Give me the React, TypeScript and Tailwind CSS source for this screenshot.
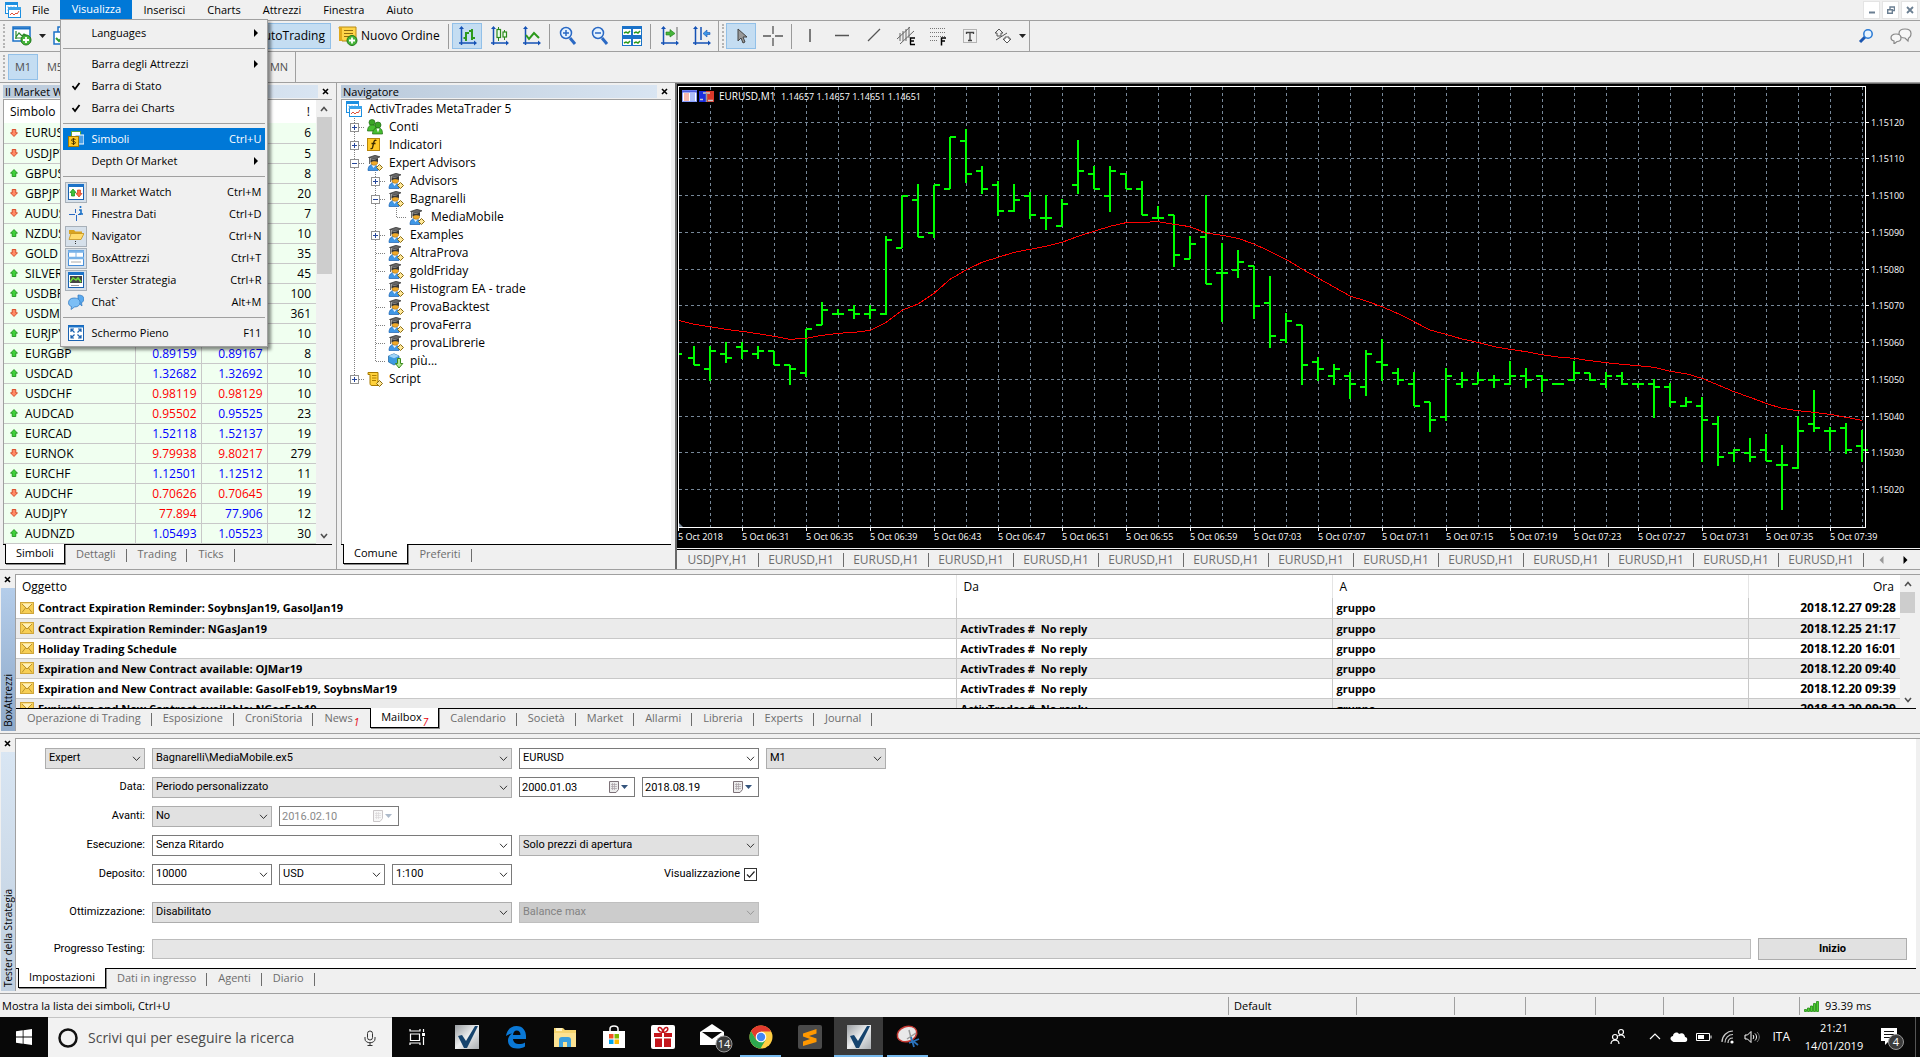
import { useState } from "react"
import type { ReactNode } from "react"
import clsx from "clsx"

type Quote = { symbol: string; up: boolean; bid?: string; ask?: string; bidUp?: boolean; askUp?: boolean; spread: number }

const quotes: Quote[] = [
  { symbol: "EURUSD", up: false, spread: 6 },
  { symbol: "USDJPY", up: false, spread: 5 },
  { symbol: "GBPUSD", up: true, spread: 8 },
  { symbol: "GBPJPY", up: false, spread: 20 },
  { symbol: "AUDUSD", up: false, spread: 7 },
  { symbol: "NZDUSD", up: true, spread: 10 },
  { symbol: "GOLD", up: false, spread: 35 },
  { symbol: "SILVER", up: true, spread: 45 },
  { symbol: "USDBRL", up: true, spread: 100 },
  { symbol: "USDMXN", up: false, spread: 361 },
  { symbol: "EURJPY", up: true, spread: 10 },
  { symbol: "EURGBP", up: true, bid: "0.89159", ask: "0.89167", bidUp: true, askUp: true, spread: 8 },
  { symbol: "USDCAD", up: true, bid: "1.32682", ask: "1.32692", bidUp: true, askUp: true, spread: 10 },
  { symbol: "USDCHF", up: false, bid: "0.98119", ask: "0.98129", spread: 10 },
  { symbol: "AUDCAD", up: true, bid: "0.95502", ask: "0.95525", askUp: true, spread: 23 },
  { symbol: "EURCAD", up: true, bid: "1.52118", ask: "1.52137", bidUp: true, askUp: true, spread: 19 },
  { symbol: "EURNOK", up: false, bid: "9.79938", ask: "9.80217", spread: 279 },
  { symbol: "EURCHF", up: true, bid: "1.12501", ask: "1.12512", bidUp: true, askUp: true, spread: 11 },
  { symbol: "AUDCHF", up: false, bid: "0.70626", ask: "0.70645", spread: 19 },
  { symbol: "AUDJPY", up: false, bid: "77.894", ask: "77.906", askUp: true, spread: 12 },
  { symbol: "AUDNZD", up: true, bid: "1.05493", ask: "1.05523", bidUp: true, askUp: true, spread: 30 },
]

// open, high, low, close in thirds of a pixel, top down
const bars: number[][] = [
  [822, 822, 822, 822], [834, 798, 856, 855], [867, 798, 902, 813], [822, 787, 848, 834], [801, 787, 836, 813],
  [822, 798, 836, 813], [813, 813, 855, 855], [855, 855, 914, 867], [879, 746, 890, 746], [735, 666, 736, 690],
  [702, 687, 705, 702], [690, 676, 716, 702], [702, 676, 716, 690], [702, 468, 705, 480], [504, 348, 505, 348],
  [360, 312, 472, 471], [459, 315, 473, 315], [327, 170, 328, 171], [183, 147, 308, 282], [272, 258, 342, 327],
  [315, 303, 407, 393], [393, 312, 395, 360], [348, 336, 416, 405], [414, 346, 449, 414], [438, 357, 439, 372],
  [315, 180, 342, 272], [282, 258, 328, 327], [348, 258, 396, 272], [282, 282, 328, 327], [327, 303, 406, 405],
  [414, 378, 416, 414], [405, 405, 561, 525], [537, 468, 538, 492], [471, 346, 612, 612], [579, 489, 725, 579],
  [570, 510, 594, 546], [558, 558, 717, 678], [669, 588, 804, 768], [780, 700, 790, 722], [735, 735, 914, 855],
  [846, 831, 903, 867], [888, 852, 914, 867], [888, 876, 957, 912], [921, 810, 948, 822], [846, 777, 902, 855],
  [879, 864, 914, 900], [912, 876, 979, 978], [966, 965, 1056, 1020], [1011, 864, 1022, 888], [912, 876, 924, 900],
  [912, 876, 913, 900], [900, 885, 924, 900], [912, 843, 914, 888], [888, 864, 924, 900], [888, 886, 936, 900],
  [912, 912, 912, 912], [900, 843, 903, 879], [879, 879, 902, 900], [912, 876, 924, 888], [888, 876, 914, 912],
  [912, 909, 924, 912], [912, 897, 1014, 921], [921, 909, 980, 966], [978, 951, 980, 966], [978, 951, 1146, 1020],
  [1032, 1008, 1158, 1131], [1119, 1107, 1146, 1110], [1119, 1074, 1146, 1131], [1110, 1062, 1143, 1143], [1155, 1095, 1290, 1155],
  [1164, 1008, 1166, 1053], [1032, 930, 1056, 1044], [1053, 1041, 1113, 1053], [1044, 1030, 1122, 1110], [1098, 1050, 1146, 1110],
]

const average = [
  721, 733, 740, 748, 754, 761, 769, 778, 775, 766, 760, 757, 751, 727, 691, 672, 640, 598, 570, 547, 532, 517, 508, 499, 487,
  469, 454, 439, 428, 427, 425, 433, 440, 459, 466, 475, 492, 514, 538, 567, 594, 621, 648, 663, 680, 701, 725, 750, 763, 777,
  787, 800, 808, 815, 824, 831, 835, 842, 848, 853, 857, 862, 874, 881, 895, 915, 935, 952, 970, 985, 992, 997, 1003, 1012, 1021,
]

const prices: [string, number][] = [
  ["1.15120", 130], ["1.15110", 238], ["1.15100", 349], ["1.15090", 460], ["1.15080", 571], ["1.15070", 679],
  ["1.15060", 790], ["1.15050", 901], ["1.15040", 1012], ["1.15030", 1120], ["1.15020", 1231],
]

const times = [
  "2018", "06:31", "06:35", "06:39", "06:43", "06:47", "06:51", "06:55", "06:59", "07:03",
  "07:07", "07:11", "07:15", "07:19", "07:23", "07:27", "07:31", "07:35", "07:39",
]

const mails = [
  { subject: "Contract Expiration Reminder: SoybnsJan19, GasolJan19", from: "", time: "2018.12.27 09:28" },
  { subject: "Contract Expiration Reminder: NGasJan19", from: "ActivTrades #  No reply", time: "2018.12.25 21:17" },
  { subject: "Holiday Trading Schedule", from: "ActivTrades #  No reply", time: "2018.12.20 16:01" },
  { subject: "Expiration and New Contract available: OJMar19", from: "ActivTrades #  No reply", time: "2018.12.20 09:40" },
  { subject: "Expiration and New Contract available: GasolFeb19, SoybnsMar19", from: "ActivTrades #  No reply", time: "2018.12.20 09:39" },
  { subject: "Expiration and New Contract available: NGasFeb19", from: "ActivTrades #  No reply", time: "2018.12.20 09:39" },
]

const Y = (v: number) => Math.round(v / 3) - 4
const X = (i: number) => 1 + 16 * i

/* ---------- icons ---------- */

function Svg({ size = 16, children }: { size?: number; children: ReactNode }) {
  return (
    <svg width={size} height={size} viewBox={`0 0 ${size} ${size}`} fill="none" className="shrink-0" aria-hidden="true">
      {children}
    </svg>
  )
}

function AppIcon() {
  return (
    <Svg>
      <rect x="0.5" y="0.5" width="12" height="11" fill="#fff" stroke="#1c8fe0" />
      <path d="M0 0h13v3H0z" fill="#1c8fe0" />
      <path d="M2 5h9M2 8h9" stroke="#9ccbee" strokeDasharray="2 1" />
      <rect x="3.5" y="5.5" width="12" height="10" fill="#fff" stroke="#1c8fe0" />
      <path d="M3 5h13v3H3z" fill="#3aa3ea" />
      <path d="M5 13l2-2 2 2 2-2 1 1 2-3" stroke="#e0513a" />
    </Svg>
  )
}

function Arrow({ up }: { up: boolean }) {
  return (
    <svg width="8" height="8" viewBox="0 0 8 8" className="shrink-0" aria-hidden="true">
      {up ? (
        <path d="M4 .5L7.5 4.2H5.8V7.5H2.2V4.2H.5z" fill="#3fd03a" stroke="#138a12" strokeWidth=".8" />
      ) : (
        <path d="M4 7.5L.5 3.8h1.7V.5h3.6v3.3h1.7z" fill="#ff8a66" stroke="#cf3712" strokeWidth=".8" />
      )}
    </svg>
  )
}

function ExpertIcon() {
  return (
    <Svg>
      <path d="M1 15.500c0-4 2-6 5-6s5 2 5 6z" fill="#3f97e6" stroke="#1b62b0" strokeWidth=".7" />
      <path d="M4.5 10l2 3L9 10z" fill="#eaf4ff" />
      <path d="M4 5.500h6.500v2.500c0 3-6.500 3-6.500 0z" fill="#f0a929" stroke="#8a5c08" strokeWidth=".5" />
      <path d="M1.500 2.500L8 .3 13 1.800 7.500 4.300z" fill="#666" stroke="#222" strokeWidth=".6" />
      <path d="M3.500 4v3.500c2-1.500 5.500-1.500 7.500-.5V3L7.500 4.800z" fill="#383838" />
      <path d="M2.500 3V9" stroke="#444" strokeWidth=".8" />
      <path d="M12.500 9.500l3 3-3 3-3-3z" fill="#ffe89a" stroke="#8a6a10" />
    </Svg>
  )
}

function ContiIcon() {
  return (
    <Svg>
      <circle cx="5" cy="3.500" r="3" fill="#3aa627" stroke="#1f6a14" strokeWidth=".7" />
      <path d="M0.500 12c0-4 2-6 5-6s4 2 4 6z" fill="#46bd30" stroke="#1f6a14" strokeWidth=".7" />
      <circle cx="11" cy="6" r="3" fill="#3aa627" stroke="#1f6a14" strokeWidth=".7" />
      <path d="M5.500 15c0-4 2-6 5.500-6s4.500 2 4.500 6z" fill="#46bd30" stroke="#1f6a14" strokeWidth=".7" />
      <path d="M9.500 9.500l1.500 4 1.500-4z" fill="#fff" />
    </Svg>
  )
}

function IndicatorIcon() {
  return (
    <Svg>
      <rect x="0.500" y="1.500" width="12" height="12" fill="#ffc926" stroke="#b8860b" />
      <path d="M9.500 3.500c-2-.8-2.500.5-3 3l-.8 3.500c-.3 1.500-1 2-2.200 1.500M4.500 6.500h4" stroke="#3a2b00" strokeWidth="1.300" />
    </Svg>
  )
}

function MoreIcon() {
  return (
    <Svg>
      <path d="M0.500 3L6 .8 11 3v6.500L6 12 .5 9z" fill="#3d9be0" stroke="#1a5f9e" strokeWidth=".7" />
      <path d="M.5 3L6 5.200 11 3 6 .8z" fill="#9fd3f7" />
      <path d="M9.500 5.500h3v5h2.300L11 15 7.500 10.500h2z" fill="#b7ea93" stroke="#3a8a1c" />
    </Svg>
  )
}

function ScriptIcon() {
  return (
    <Svg>
      <path d="M1 1.500h10v10.500h1v2.500H5c-1.500 0-2-1-2-2v-9H1z" fill="#ffd23c" stroke="#a87a00" />
      <path d="M5 4.500h4.500M5 7h4.500M5 9.500h4" stroke="#b07f00" />
      <path d="M12.500 9.500l3 3-3 3-3-3z" fill="#ffe89a" stroke="#8a6a10" />
    </Svg>
  )
}

function MailIcon() {
  return (
    <svg width="14" height="12" viewBox="0 0 14 12" className="shrink-0" aria-hidden="true">
      <rect x=".5" y=".5" width="13" height="11" fill="#f7cf55" stroke="#d0a63c" />
      <path d="M2 1.500h10L7 6.500z" fill="#fff0b8" />
      <path d="M2 2l5 5 5-5M2 10.500l3.500-4.500M12 10.500L8.500 6" stroke="#a98220" fill="none" strokeWidth=".8" />
    </svg>
  )
}

function CloseMark() {
  return (
    <svg width="7" height="7" viewBox="0 0 7 7" aria-hidden="true">
      <path d="M1 1l5 5M6 1L1 6" stroke="#000" strokeWidth="1.600" />
    </svg>
  )
}

function Chevron({ dir = "down" }: { dir?: "up" | "down" }) {
  return (
    <svg width="8" height="6" viewBox="0 0 8 6" aria-hidden="true">
      <path d={dir === "down" ? "M1 1l3 3.500L7 1" : "M1 5l3-3.500L7 5"} stroke="#505050" strokeWidth="1.600" fill="none" />
    </svg>
  )
}

/* ---------- toolbar ---------- */

function Axes() {
  return (
    <>
      <path d="M4.500 2v17M2 17h15" stroke="#1552b5" strokeWidth="1.500" />
      <path d="M4.500 0l2.500 3H2zM20 17l-3-2.500v5z" fill="#1552b5" />
    </>
  )
}

function ToolButton({ label, pressed, children }: { label: string; pressed?: boolean; children: ReactNode }) {
  return (
    <button
      aria-label={label}
      className={clsx(
        "flex h-[26px] w-[30px] items-center justify-center border",
        pressed ? "border-[#92c0e8] bg-[#c4ddf2]" : "border-transparent hover:bg-[#d8e8f6]"
      )}
    >
      <Svg size={20}>{children}</Svg>
    </button>
  )
}

function Separator() {
  return <span className="mx-px h-[25px] w-px bg-[#9a9a9a]" />
}

function Grip() {
  return <span className="h-6 w-0 border-l-2 border-dotted border-[#b4b4b4]" />
}

function Caret() {
  return (
    <svg width="7" height="4" viewBox="0 0 7 4" aria-hidden="true">
      <path d="M0 0h7L3.500 4z" fill="#222" />
    </svg>
  )
}

function Toolbar() {
  return (
    <div className="flex h-[31px] items-center border-t border-[#a0a0a0] bg-[#f0f0f0]">
      <div className="flex h-full items-center gap-[2px] border-r border-[#a0a0a0] pl-[3px] pr-[3px]">
        <Grip />
        <ToolButton label="Nuovo Chart">
          <rect x="1" y="1" width="17" height="14" fill="#fff" stroke="#1b72c8" strokeWidth="1.500" />
          <path d="M1 2.500h17" stroke="#1b72c8" strokeWidth="2" />
          <path d="M4 5v8M3 12h10M4 11l3-4 3 3 2-2 3 2" stroke="#2c8a2c" strokeWidth="1.200" />
          <circle cx="14" cy="14" r="5" fill="#46b53a" stroke="#1f7a18" />
          <path d="M14 11v6M11 14h6" stroke="#fff" strokeWidth="1.800" />
        </ToolButton>
        <Caret />
        <ToolButton label="Profili">
          <rect x="5" y="1" width="13" height="10" fill="#fff" stroke="#1b72c8" strokeWidth="1.500" />
          <rect x="1" y="6" width="13" height="12" fill="#fff" stroke="#1b72c8" strokeWidth="1.500" />
          <path d="M3 12l3 3 4-4 3 3" stroke="#2f9a2f" strokeWidth="2" />
        </ToolButton>
        <button className="ml-[153px] h-[26px] w-[98px] border border-[#92c0e8] bg-[#c4ddf2] pr-[5px] text-right text-[12px]">AutoTrading</button>
        <button className="flex h-[26px] items-center gap-[3px] px-[5px] text-[12px]">
          <Svg size={20}>
            <path d="M1 1h17v14H4z" fill="#ffd54a" stroke="#b88a10" />
            <path d="M1 1v14h3V1z" fill="#e0a91c" />
            <path d="M6 4.500h9M6 7.500h9M6 10.500h5" stroke="#8f6c10" />
            <circle cx="14" cy="14.500" r="5" fill="#46b53a" stroke="#1f7a18" />
            <path d="M14 11.500v6M11 14.500h6" stroke="#fff" strokeWidth="1.800" />
          </Svg>
          Nuovo Ordine
        </button>
        <Separator />
        <ToolButton label="Barre" pressed>
          <Axes />
          <path d="M9 6v9M6.500 12H9M9 7h3M15 3v11M12 5h3M15 12h3" stroke="#2c9a1c" strokeWidth="2" />
        </ToolButton>
        <ToolButton label="Candele">
          <Axes />
          <path d="M9.500 1v14M15.500 4v10" stroke="#2c8a1c" />
          <rect x="8" y="3.500" width="3.500" height="8" fill="#eaffea" stroke="#2c8a1c" strokeWidth="1.200" />
          <rect x="14" y="6" width="3.500" height="5" fill="#eaffea" stroke="#2c8a1c" strokeWidth="1.200" />
        </ToolButton>
        <ToolButton label="Linea">
          <Axes />
          <path d="M5 9l3 4 5-6 5 5" stroke="#2c9a1c" strokeWidth="2" />
        </ToolButton>
        <Separator />
        <ToolButton label="Zoom avanti">
          <path d="M12 12l5 6" stroke="#2a69c4" strokeWidth="3" />
          <circle cx="8" cy="7" r="5.500" fill="#e6f3ff" stroke="#2a69c4" strokeWidth="1.500" />
          <path d="M5 7h6M8 4v6" stroke="#2a69c4" strokeWidth="1.500" />
        </ToolButton>
        <ToolButton label="Zoom indietro">
          <path d="M12 12l5 6" stroke="#2a69c4" strokeWidth="3" />
          <circle cx="8" cy="7" r="5.500" fill="#e6f3ff" stroke="#2a69c4" strokeWidth="1.500" />
          <path d="M5 7h6" stroke="#2a69c4" strokeWidth="1.500" />
        </ToolButton>
        <ToolButton label="Affianca finestre">
          {[[0, 0], [10, 0], [0, 10], [10, 10]].map(([x, y]) => (
            <g key={`${x}-${y}`}>
              <rect x={x + 0.5} y={y + 0.5} width="9" height="9" fill="#fff" stroke="#1b72c8" />
              <path d={`M${x} ${y + 1.5}h10`} stroke="#1b72c8" strokeWidth="3" />
              <path d={`M${x + 2} ${y + 7}l2-1 2 1 2-2`} stroke="#2c9a1c" strokeWidth="1.500" />
            </g>
          ))}
        </ToolButton>
        <Separator />
        <ToolButton label="Scorrimento automatico">
          <Axes />
          <path d="M18 1v13" stroke="#666" />
          <path d="M7 6h4V3.500L16 7.500 11 11V9H7z" fill="#46b53a" stroke="#1f7a18" strokeWidth=".6" />
        </ToolButton>
        <ToolButton label="Spostamento chart">
          <Axes />
          <path d="M10 1v13" stroke="#1552b5" strokeWidth="1.500" />
          <path d="M19 6.500h-3V4l-4 3.500 4 3.500V8.500h3z" fill="#3f97e6" stroke="#1552b5" strokeWidth=".6" />
        </ToolButton>
        <span className="mr-px h-full w-px bg-[#a0a0a0]" />
        <Grip />
        <ToolButton label="Cursore" pressed>
          <path d="M7 3v12l3-3 2 5 2-1-2-5h4z" fill="#999" stroke="#444" />
        </ToolButton>
        <ToolButton label="Croce">
          <path d="M10 0v8M10 12v8M0 10h8M12 10h8" stroke="#555" strokeWidth="1.300" />
        </ToolButton>
        <Separator />
        <ToolButton label="Linea verticale"><path d="M10 3v13" stroke="#555" strokeWidth="1.500" /></ToolButton>
        <ToolButton label="Linea orizzontale"><path d="M3 9.500h14" stroke="#555" strokeWidth="1.500" /></ToolButton>
        <ToolButton label="Linea di tendenza"><path d="M4 15L16 3" stroke="#555" strokeWidth="1.300" /></ToolButton>
        <ToolButton label="Canale">
          <path d="M1 13L14 1M4 18L18 5M4 7v8M7 5v10M10 3v12M13 1v11" stroke="#666" />
          <path d="M14 12h5M14 15h4M14 18.500h5M14.500 11.500v7" stroke="#000" strokeWidth="1.400" />
        </ToolButton>
        <ToolButton label="Fibonacci">
          <path d="M2 2.500h16M2 6.500h16M2 10.500h16M2 14.500h8" stroke="#777" strokeDasharray="1 1" />
          <path d="M13 12h5M13 15h4M13.500 11.500v8" stroke="#000" strokeWidth="1.500" />
        </ToolButton>
        <ToolButton label="Testo">
          <rect x="3.500" y="3.500" width="13" height="13" stroke="#777" strokeDasharray="1 1" />
          <path d="M6.500 8V6.500h7V8M10 6.500v8M8 14.500h4" stroke="#444" strokeWidth="1.300" />
        </ToolButton>
        <ToolButton label="Frecce">
          <path d="M7 3l4 4H9v3H5V7H3zM4 14L15 7" stroke="#555" />
          <path d="M15 17l-4-4h2v-2h4v2h2z" fill="#fff" stroke="#555" />
        </ToolButton>
        <Caret />
      </div>
      <div className="ml-auto flex items-center gap-4 pr-2">
        <Svg>
          <path d="M2 14l5-5" stroke="#1b56b0" strokeWidth="3" />
          <circle cx="10" cy="6" r="4.200" fill="#e8f4ff" stroke="#2a7ad4" strokeWidth="1.500" />
        </Svg>
        <svg width="22" height="16" viewBox="0 0 22 16" fill="#f7f7f7" stroke="#888" strokeWidth="1.200" aria-hidden="true">
          <path d="M15 1c4 0 6 1.500 6 4.500S19 10 18.500 10l-.5 3-3-3c-3 0-6-1.500-6-4.500S11 1 15 1z" />
          <path d="M6 6c3.500 0 5 1.500 5 4s-2 3.500-4 3.500L4 16v-3c-2-.5-3-1.500-3-3 0-2.500 2-4 5-4z" />
        </svg>
      </div>
    </div>
  )
}

/* ---------- menus ---------- */

const menuIcons: Record<string, ReactNode> = {
  symbols: (
    <Svg>
      <rect x="3.500" y=".5" width="9" height="8" fill="#fff" stroke="#58a83c" />
      <rect x="7" y="4" width="9" height="9" fill="#4aa0e8" stroke="#fff" />
      <rect x=".5" y="5.500" width="10" height="10" fill="#ffc926" stroke="#a87a00" />
      <path d="M7.500 8.500c-2-1-4-.5-4 .7 0 1.600 4 .8 4 2.500 0 1.300-2.500 1.500-4 .6M5.500 7.200v6.800" stroke="#4a3600" />
    </Svg>
  ),
  market: (
    <Svg>
      <rect x=".5" y=".5" width="15" height="15" fill="#fff" stroke="#1b62b0" />
      <path d="M0 1.500h16" stroke="#1b72c8" strokeWidth="3" />
      <path d="M5 5l3 3.500H6.500V12h-3V8.500H2z" fill="#3fc03a" stroke="#138a12" strokeWidth=".7" />
      <path d="M11 13L8 9.500h1.500V6h3v3.500H14z" fill="#ff6a46" stroke="#cf3712" strokeWidth=".7" />
    </Svg>
  ),
  data: (
    <Svg>
      <path d="M1 8.500h6M8.500 9v6M10 8.500h3M7.500 3v4" stroke="#2a69c4" />
      <path d="M12.500 0v2M11 4h2v4M11 8h4" stroke="#1b72c8" strokeWidth="1.600" />
    </Svg>
  ),
  navigator: (
    <Svg>
      <path d="M1 2h5l1.500 1.500H14V6H1z" fill="#d9a420" />
      <path d="M3 5.500h13l-3 6H1z" fill="#ffdc6e" stroke="#c4921c" strokeWidth=".8" />
      <path d="M7.500 13v3" stroke="#333" strokeDasharray="1 1" />
    </Svg>
  ),
  toolbox: (
    <Svg>
      <rect x=".5" y=".5" width="15" height="15" fill="#fff" stroke="#4a90d9" />
      <path d="M0 1.500h16M0 8h16" stroke="#7ab3e8" strokeWidth="2.500" />
      <path d="M8 2v6" stroke="#7ab3e8" />
      <path d="M3 12h10" stroke="#aaa" />
    </Svg>
  ),
  tester: (
    <Svg>
      <rect x=".5" y=".5" width="15" height="15" fill="#fff" stroke="#1b62b0" />
      <path d="M0 1.500h16" stroke="#1b72c8" strokeWidth="3" />
      <path d="M2 4h12v7H2z" fill="#444" />
      <path d="M2 10l3-4 3 2 2-2 3 4" stroke="#6fdc3a" strokeWidth="1.500" />
      <path d="M3 13.500h8" stroke="#999" />
    </Svg>
  ),
  chat: (
    <Svg>
      <path d="M10 1c4 0 6 1.500 6 4 0 2-1 3-2.500 3.500L14 12l-4-3.500z" fill="#5aa9ee" stroke="#2a73bd" strokeWidth=".7" />
      <path d="M6 4c4 0 6 1.800 6 4.500S10 13 6.500 13L3 15.500 3.500 12.500C1.500 12 .5 10.500.5 8.800.5 6 2.500 4 6 4z" fill="#7cbef5" stroke="#2a73bd" strokeWidth=".7" />
    </Svg>
  ),
  full: (
    <Svg>
      <rect x=".5" y=".5" width="15" height="15" fill="#fff" stroke="#1b62b0" />
      <path d="M0 1.500h16" stroke="#1b72c8" strokeWidth="2" />
      <path d="M3 7V4h3M10 4h3v3M13 10v3h-3M6 13H3v-3M3 4l3.500 3.500M13 4L9.500 7.500M13 13l-3.500-3.500M3 13l3.500-3.500" stroke="#1b62b0" strokeWidth="1.200" />
    </Svg>
  ),
}

type MenuItem = { label: string; keys?: string; icon?: string; boxed?: boolean; checked?: boolean; sub?: boolean; active?: boolean }

const menuGroups: MenuItem[][] = [
  [{ label: "Languages", sub: true }],
  [
    { label: "Barra degli Attrezzi", sub: true },
    { label: "Barra di Stato", checked: true },
    { label: "Barra dei Charts", checked: true },
  ],
  [
    { label: "Simboli", keys: "Ctrl+U", icon: "symbols", active: true },
    { label: "Depth Of Market", sub: true },
  ],
  [
    { label: "Il Market Watch", keys: "Ctrl+M", icon: "market", boxed: true },
    { label: "Finestra Dati", keys: "Ctrl+D", icon: "data" },
    { label: "Navigator", keys: "Ctrl+N", icon: "navigator", boxed: true },
    { label: "BoxAttrezzi", keys: "Ctrl+T", icon: "toolbox", boxed: true },
    { label: "Terster Strategia", keys: "Ctrl+R", icon: "tester", boxed: true },
    { label: "Chat`", keys: "Alt+M", icon: "chat" },
  ],
  [{ label: "Schermo Pieno", keys: "F11", icon: "full" }],
]

function ViewMenu() {
  return (
    <div className="absolute left-0 top-[19px] z-10 w-[208px] border border-[#a0a0a0] bg-[#f0f0f0] p-[2px] text-black shadow-[3px_3px_3px_rgba(0,0,0,0.45)]">
      {menuGroups.map((group, g) => (
        <div key={g} className={clsx(g > 0 && "mt-1 border-t border-[#a0a0a0] pt-1")}>
          {group.map(item => (
            <button
              key={item.label}
              className={clsx("flex h-[22px] w-full items-center pr-1 text-[11px]", item.active && "bg-[#0078d7] text-white")}
            >
              <span
                className={clsx(
                  "ml-[2px] mr-1 flex h-[21px] w-[22px] shrink-0 items-center justify-center border",
                  item.boxed ? "border-[#a8b0b8] bg-[#d6e0ea]" : "border-transparent"
                )}
              >
                {item.icon && menuIcons[item.icon]}
                {item.checked && (
                  <Svg size={10}>
                    <path d="M1.500 5l2.500 3 4.500-6" stroke="#000" strokeWidth="1.800" />
                  </Svg>
                )}
              </span>
              <span className="grow text-left">{item.label}</span>
              {item.keys}
              {item.sub && (
                <svg width="7" height="8" viewBox="0 0 7 8" aria-hidden="true"><path d="M0 0l4 4-4 4z" fill="#000" /></svg>
              )}
            </button>
          ))}
        </div>
      ))}
    </div>
  )
}

function MenuBar() {
  const [open, setOpen] = useState(true)
  return (
    <nav className="flex h-[20px] items-center bg-[#f0f0f0] pl-[5px] text-[11px]">
      <AppIcon />
      <button className="px-[11px]">File</button>
      <div className="relative h-full">
        <button onClick={() => setOpen(o => !o)} className="h-[19px] w-[72px] bg-[#0078d7] text-white">Visualizza</button>
        {open && <ViewMenu />}
      </div>
      {["Inserisci", "Charts", "Attrezzi", "Finestra", "Aiuto"].map(name => (
        <button key={name} className="px-[11px]">{name}</button>
      ))}
      <div className="ml-auto flex items-center gap-[2px] pr-[2px]">
        <button aria-label="Riduci" className="flex h-[18px] w-[17px] items-center justify-center border border-[#e4e4e4] bg-white">
          <Svg size={8}><path d="M1 6.500h6" stroke="#6b7f92" strokeWidth="2" /></Svg>
        </button>
        <button aria-label="Ripristina" className="flex h-[18px] w-[17px] items-center justify-center border border-[#e4e4e4] bg-white">
          <Svg size={8}><path d="M3 3V1h4.500v3.500H6M.7 3.700h4.600v3.600H.7z" stroke="#6b7f92" strokeWidth="1.400" /></Svg>
        </button>
        <button aria-label="Chiudi" className="flex h-[18px] w-[17px] items-center justify-center border border-[#e4e4e4] bg-white">
          <Svg size={8}><path d="M1 1l6 6M7 1L1 7" stroke="#6b7f92" strokeWidth="1.800" /></Svg>
        </button>
      </div>
    </nav>
  )
}

function Timeframes() {
  return (
    <div className="h-[32px] border-y border-[#a0a0a0] bg-[#f0f0f0]">
      <div className="flex h-full w-[296px] items-center gap-[2px] border-r border-[#a0a0a0] pl-[3px]">
        <Grip />
        {["M1", "M5", "M15", "M30", "H1", "H4", "D1", "W1", "MN"].map((tf, i) => (
          <button
            key={tf}
            className={clsx("h-[26px] w-[30px] border text-[11px] text-[#505050]", i === 0 ? "ml-px border-[#92c0e8] bg-[#c4ddf2]" : "border-transparent")}
          >
            {tf}
          </button>
        ))}
      </div>
    </div>
  )
}

/* ---------- shared panel parts ---------- */

function PanelTitle({ children }: { children: ReactNode }) {
  return (
    <div className="flex h-[15px] items-center text-[11px] leading-[14px]">
      <h2 className="h-[13px] grow bg-linear-to-r from-[#b9c9da] to-[#d9e5f2] pl-[2px] leading-[13px]">{children}</h2>
      <button aria-label="Chiudi" className="flex w-[14px] justify-center"><CloseMark /></button>
    </div>
  )
}

function Tabs({ items, active, badges = {} }: { items: string[]; active: string; badges?: Record<string, number> }) {
  return (
    <div className="flex h-[21px] items-start border-t border-black bg-[#f0f0f0] text-[11px]">
      {items.map((name, i) => {
        const on = name === active
        const beforeActive = items[i + 1] === active
        return (
          <button
            key={name}
            className={clsx(
              "relative flex items-center whitespace-nowrap",
              on ? "-mt-px h-[20px] border border-t-0 border-black bg-white px-[10px] text-black shadow-[1px_1px_0_#888]" : "h-[18px] px-[11px] text-[#6d6d6d]",
              on && i === 0 && "ml-[2px]"
            )}
          >
            {name}
            {badges[name] && <sub className="bottom-[-4px] pl-px text-[10px] italic text-red-600">{badges[name]}</sub>}
            {!on && !beforeActive && <span className="absolute right-0 top-[4px] h-[13px] w-px bg-[#6d6d6d]" />}
          </button>
        )
      })}
    </div>
  )
}

function ScrollBar({ thumb }: { thumb: string }) {
  return (
    <div className="flex w-[16px] shrink-0 flex-col items-center bg-[#f0f0f0]">
      <span className="flex h-[17px] items-center"><Chevron dir="up" /></span>
      <span className={clsx("w-[15px] bg-[#cdcdcd]", thumb)} />
      <span className="mt-auto flex h-[16px] items-center"><Chevron /></span>
    </div>
  )
}

function SideBar({ title, tone }: { title: string; tone: string }) {
  return (
    <div className="flex w-[15px] shrink-0 flex-col items-center">
      <button aria-label="Chiudi" className="mb-[3px] flex h-[11px] items-center"><CloseMark /></button>
      <div className={clsx("flex w-[14px] grow items-center justify-end text-[10px] leading-[14px] [writing-mode:vertical-rl]", tone)}>
        <span className="rotate-180 whitespace-nowrap pt-[4px]">{title}</span>
      </div>
    </div>
  )
}

/* ---------- top panels ---------- */

function MarketWatch() {
  const cell = "h-[20px] border-b border-r border-[#c8c8c8] p-0 pr-[4px] text-right"
  return (
    <section className="flex w-[337px] shrink-0 flex-col border-r border-[#a0a0a0] pl-[3px] pr-[4px] pt-px">
      <PanelTitle>Il Market Watch</PanelTitle>
      <div className="flex h-[445px] border-l border-t border-[#a0a0a0] bg-white">
        <table className="w-full table-fixed border-collapse text-[12px] leading-[19px]">
          <colgroup>
            <col />
            <col className="w-[66px]" />
            <col className="w-[66px]" />
            <col className="w-[49px]" />
          </colgroup>
          <thead>
            <tr className="h-[23px]">
              <th className="pl-[6px] text-left font-normal">Simbolo</th>
              <th />
              <th />
              <th className="pr-[6px] text-right font-normal">!</th>
            </tr>
          </thead>
          <tbody className="bg-[#f0fff0]">
            {quotes.map(q => (
              <tr key={q.symbol}>
                <td className="h-[20px] border-b border-r border-[#c8c8c8] p-0 pl-[6px]">
                  <span className="flex items-center gap-[7px]"><Arrow up={q.up} />{q.symbol}</span>
                </td>
                <td className={clsx(cell, q.bidUp ? "text-[#0000ff]" : "text-[#ff0000]")}>{q.bid}</td>
                <td className={clsx(cell, q.askUp ? "text-[#0000ff]" : "text-[#ff0000]")}>{q.ask}</td>
                <td className="h-[20px] border-b border-[#c8c8c8] p-0 pr-[5px] text-right">{q.spread}</td>
              </tr>
            ))}
          </tbody>
        </table>
        <ScrollBar thumb="h-[157px]" />
      </div>
      <Tabs items={["Simboli", "Dettagli", "Trading", "Ticks"]} active="Simboli" />
    </section>
  )
}

type Node = { label: string; depth: number; open?: boolean; leaf?: boolean; icon?: ReactNode; last?: boolean }

const tree: Node[] = [
  { label: "Conti", depth: 0, icon: <ContiIcon /> },
  { label: "Indicatori", depth: 0, icon: <IndicatorIcon /> },
  { label: "Expert Advisors", depth: 0, open: true },
  { label: "Advisors", depth: 1 },
  { label: "Bagnarelli", depth: 1, open: true },
  { label: "MediaMobile", depth: 2, leaf: true, last: true },
  { label: "Examples", depth: 1 },
  { label: "AltraProva", depth: 1, leaf: true },
  { label: "goldFriday", depth: 1, leaf: true },
  { label: "Histogram EA - trade", depth: 1, leaf: true },
  { label: "ProvaBacktest", depth: 1, leaf: true },
  { label: "provaFerra", depth: 1, leaf: true },
  { label: "provaLibrerie", depth: 1, leaf: true },
  { label: "più...", depth: 1, leaf: true, icon: <MoreIcon />, last: true },
  { label: "Script", depth: 0, icon: <ScriptIcon />, last: true },
]

function TreeLines({ node }: { node: Node }) {
  const cols = Array.from({ length: node.depth + 1 }, (_, i) => i)
  return (
    <>
      {cols.map(i => {
        const own = i === node.depth
        return (
          <svg key={i} width="21" height="18" viewBox="0 0 21 18" fill="none" shapeRendering="crispEdges" aria-hidden="true">
            <path d={own && node.last ? "M8.500 0v9" : "M8.500 0v18"} stroke="#808080" strokeDasharray="1 1" />
            {own && <path d="M9 9.500h10" stroke="#808080" strokeDasharray="1 1" />}
            {own && !node.leaf && (
              <>
                <rect x="4.500" y="5.500" width="8" height="8" fill="#fff" stroke="#919191" />
                <path d={node.open ? "M6 9.500h5" : "M6 9.500h5M8.500 7v5"} stroke="#26479b" />
              </>
            )}
          </svg>
        )
      })}
    </>
  )
}

function Navigator() {
  return (
    <section className="flex w-[338px] shrink-0 flex-col pl-[4px] pr-[4px] pt-px">
      <PanelTitle>Navigatore</PanelTitle>
      <div className="grow border-l border-t border-[#a0a0a0] bg-white pl-[4px] text-[12px]">
        <div className="flex h-[18px] items-center gap-[6px]">
          <AppIcon />
          ActivTrades MetaTrader 5
        </div>
        <ul>
          {tree.map(n => (
            <li key={n.label} className="flex h-[18px] items-center">
              <TreeLines node={n} />
              {n.icon ?? <ExpertIcon />}
              <span className="pl-[6px]">{n.label}</span>
            </li>
          ))}
        </ul>
      </div>
      <Tabs items={["Comune", "Preferiti"]} active="Comune" />
      <div className="h-[4px]" />
    </section>
  )
}

function Chart() {
  return (
    <svg className="block h-[465px] w-full bg-black" role="img" aria-label="EURUSD,M1">
      <g shapeRendering="crispEdges" fill="none">
        <g stroke="#778899" strokeDasharray="3 3">
          {prices.map(([p, v]) => <path key={p} d={`M2 ${Y(v) - 0.5}H1188`} />)}
          {Array.from({ length: 37 }, (_, i) => <path key={i} d={`M${X(i * 2 + 2) + 0.5} 3V443`} />)}
        </g>
        <path
          d={bars.map(([o, h, l, c], i) => {
            const x = X(i)
            const left = i === 0 ? "" : `M${x - 6} ${Y(o)}H${x}`
            return `${left}M${x} ${Y(h)}V${Y(l)}M${x} ${Y(c)}H${i === 0 ? x + 4 : x + 6}`
          }).join("")}
          stroke="#00ff00"
          strokeWidth="2"
        />
        <path d={average.map((v, i) => `${i ? "L" : "M"}${X(i)} ${v / 3 - 4}`).join("")} stroke="#ff0000" />
        <path d="M1.500 2.500H1188.500V443.500H1.500z" stroke="#fff" />
        {prices.map(([p, v]) => <path key={p} d={`M1188 ${Y(v) - 0.5}h4`} stroke="#fff" />)}
        {times.map((t, i) => <path key={t} d={`M${X(i * 4) + 0.5} 443v4`} stroke="#fff" />)}
      </g>
      <path d="M2 439l4 4H2z" fill="#778899" />
      <g fill="#fff" fontSize="9">
        {prices.map(([p, v]) => <text key={p} x="1194" y={Y(v) + 3}>{p}</text>)}
        {times.map((t, i) => <text key={t} x={X(i * 4)} y="456">5 Oct {t}</text>)}
        <text x="42" y="16" fontSize="10">EURUSD,M1</text>
        <text x="104" y="16">1.14657 1.14657 1.14651 1.14651</text>
      </g>
      <g>
        <rect x="5.500" y="6.500" width="14" height="11" fill="#fff" stroke="#8aa0ff" />
        <path d="M5 7.500h15" stroke="#4a5ae0" strokeWidth="2" />
        <path d="M7 10h5M7 12h5M7 14h5M7 16h5" stroke="#f07060" />
        <path d="M13 10h5M13 12h5M13 14h5M13 16h5" stroke="#5a7af0" />
        <rect x="22" y="7" width="7" height="11" fill="#1a2ee0" />
        <rect x="29" y="7" width="8" height="11" fill="#d8382a" />
        <path d="M26 9h7M26 15.500h-3M31 16.500h5" stroke="#ccc" strokeWidth="1.500" />
        <path d="M29.500 9v9" stroke="#999" strokeWidth="1.500" />
      </g>
    </svg>
  )
}

function ChartArea() {
  return (
    <section className="flex min-w-0 grow flex-col border-l-2 border-t border-[#696969]">
      <Chart />
      <div className="mt-px flex h-[20px] items-center border-t border-black text-[12px] text-[#6d6d6d]">
        {Array.from({ length: 14 }, (_, i) => (
          <button key={i} className="h-[14px] w-[85px] shrink-0 border-r border-[#6d6d6d] leading-[14px] first:w-[82px]">
            {i === 0 ? "USDJPY,H1" : "EURUSD,H1"}
          </button>
        ))}
        <div className="ml-auto flex gap-4 pr-[10px]">
          <button aria-label="Indietro"><Svg size={8}><path d="M5.500 0v8L1.500 4z" fill="#999" /></Svg></button>
          <button aria-label="Avanti"><Svg size={8}><path d="M1.500 0v8l4-4z" fill="#000" /></Svg></button>
        </div>
      </div>
    </section>
  )
}

/* ---------- toolbox ---------- */

function Toolbox() {
  return (
    <section className="flex h-[164px] border-b border-[#a0a0a0] pb-[2px] pt-[4px]">
      <SideBar title="BoxAttrezzi" tone="bg-linear-to-b from-[#b4cdea] to-[#8fa9c8]" />
      <div className="flex min-w-0 grow flex-col border-l border-t border-[#a0a0a0] pr-[4px]">
        <div className="flex h-[133px] overflow-hidden bg-white">
          <div className="min-w-0 grow overflow-hidden">
            <table className="w-full table-fixed border-collapse text-[12px] leading-[19px]">
              <colgroup>
                <col />
                <col className="w-[376px]" />
                <col className="w-[416px]" />
                <col className="w-[151px]" />
              </colgroup>
              <thead>
                <tr className="h-[23px]">
                  <th className="border-r border-[#e5e5e5] pl-[6px] text-left font-normal">Oggetto</th>
                  <th className="border-r border-[#e5e5e5] pl-[6px] text-left font-normal">Da</th>
                  <th className="border-r border-[#e5e5e5] pl-[6px] text-left font-normal">A</th>
                  <th className="pr-[6px] text-right font-normal">Ora</th>
                </tr>
              </thead>
              <tbody className="text-[11px] font-bold">
                {mails.map((m, i) => (
                  <tr key={i} className={clsx(i % 2 === 1 && "bg-[#ebebeb]")}>
                    <td className="h-[20px] border-b border-r border-[#c8c8c8] p-0 pl-[4px]">
                      <span className="flex items-center gap-[4px]"><MailIcon />{m.subject}</span>
                    </td>
                    <td className="border-b border-r border-[#c8c8c8] p-0 pl-[3px] whitespace-pre">{m.from}</td>
                    <td className="border-b border-r border-[#c8c8c8] p-0 pl-[3px]">gruppo</td>
                    <td className="border-b border-[#c8c8c8] p-0 pr-[4px] text-right text-[12px]">{m.time}</td>
                  </tr>
                ))}
              </tbody>
            </table>
          </div>
          <ScrollBar thumb="h-[21px]" />
        </div>
        <Tabs
          items={["Operazione di Trading", "Esposizione", "CroniStoria", "News", "Mailbox", "Calendario", "Società", "Market", "Allarmi", "Libreria", "Experts", "Journal"]}
          active="Mailbox"
          badges={{ News: 1, Mailbox: 7 }}
        />
      </div>
    </section>
  )
}

/* ---------- strategy tester ---------- */

function Combo({ label, value, width, tone = "gray" }: { label: string; value: string; width: string; tone?: "gray" | "white" | "off" }) {
  return (
    <div className={clsx("relative h-[21px] shrink-0", width)}>
      <select
        aria-label={label}
        disabled={tone === "off"}
        defaultValue={value}
        className={clsx(
          "h-full w-full appearance-none border pl-[3px] pr-5 text-[11px] opacity-100",
          tone === "gray" && "border-[#adadad] bg-[#e1e1e1]",
          tone === "white" && "border-[#7a7a7a] bg-white",
          tone === "off" && "border-[#bfbfbf] bg-[#cccccc] text-[#838383]"
        )}
      >
        <option>{value}</option>
      </select>
      <svg width="9" height="6" viewBox="0 0 9 6" className="pointer-events-none absolute right-1 top-2" aria-hidden="true">
        <path d="M1 .8l3.500 3.700L8 .8" fill="none" stroke={tone === "off" ? "#999" : "#333"} />
      </svg>
    </div>
  )
}

function DateBox({ label, value, width, off }: { label: string; value: string; width: string; off?: boolean }) {
  return (
    <div className={clsx("relative h-[21px] shrink-0", width)}>
      <input
        aria-label={label}
        defaultValue={value}
        disabled={off}
        className={clsx("block h-[20px] w-full border border-[#7a7a7a] bg-white pl-[2px] text-[11px]", off && "text-[#8a8a8a]")}
      />
      <svg width="20" height="12" viewBox="0 0 20 12" className={clsx("pointer-events-none absolute right-[6px] top-1", off && "opacity-40")} aria-hidden="true">
        <path d="M.5.500h9v8l-2.500 3H.5z" fill="#ececec" stroke="#7d7278" />
        <path d="M2 3.500h6M2 5.500h6M2 7.500h6M3.500 2v7M5.500 2v7" stroke="#a9a0a6" strokeWidth=".7" />
        <path d="M12 4h7l-3.500 4z" fill="#34547c" />
      </svg>
    </div>
  )
}

function Row({ label, children }: { label: string; children: ReactNode }) {
  return (
    <div className="flex items-center gap-[7px]">
      <span className="w-[100px] shrink-0 text-right">{label}</span>
      {children}
    </div>
  )
}

function Tester() {
  return (
    <section className="flex h-[260px] border-b border-[#a0a0a0] pb-[2px] pt-[4px]">
      <SideBar title="Tester della Strategia" tone="bg-linear-to-b from-[#d9e6f3] to-[#c0cfdf]" />
      <div className="flex min-w-0 grow flex-col border-l border-t border-[#a0a0a0] pr-[4px]">
        <div className="flex h-[229px] flex-col gap-[8px] bg-white pl-[29px] pt-[9px] font-[Roboto,'Liberation_Sans',sans-serif] text-[11px]">
          <div className="flex gap-[7px]">
            <Combo label="Tipo" value="Expert" width="w-[100px]" />
            <Combo label="Programma" value="Bagnarelli\MediaMobile.ex5" width="w-[360px]" />
            <Combo label="Simbolo" value="EURUSD" width="w-[240px]" tone="white" />
            <Combo label="Periodo" value="M1" width="w-[120px]" />
          </div>
          <Row label="Data:">
            <Combo label="Data" value="Periodo personalizzato" width="w-[360px]" />
            <DateBox label="Dal" value="2000.01.03" width="w-[116px]" />
            <DateBox label="Al" value="2018.08.19" width="w-[117px]" />
          </Row>
          <Row label="Avanti:">
            <Combo label="Avanti" value="No" width="w-[120px]" />
            <DateBox label="Data avanti" value="2016.02.10" width="w-[120px]" off />
          </Row>
          <Row label="Esecuzione:">
            <Combo label="Esecuzione" value="Senza Ritardo" width="w-[360px]" tone="white" />
            <Combo label="Modello" value="Solo prezzi di apertura" width="w-[240px]" />
          </Row>
          <Row label="Deposito:">
            <Combo label="Deposito" value="10000" width="w-[120px]" tone="white" />
            <Combo label="Valuta" value="USD" width="w-[106px]" tone="white" />
            <Combo label="Leva" value="1:100" width="w-[120px]" tone="white" />
            <label className="flex w-[240px] items-center justify-end gap-1 pr-[2px]">
              Visualizzazione
              <span className="relative h-[13px] w-[13px]">
                <input type="checkbox" defaultChecked className="peer block h-[13px] w-[13px] appearance-none border border-[#333] bg-white" />
                <svg viewBox="0 0 13 13" className="pointer-events-none absolute inset-0 hidden peer-checked:block" fill="none" aria-hidden="true">
                  <path d="M3 6.500l2.500 2.700L10.500 3.500" stroke="#222" strokeWidth="1.200" />
                </svg>
              </span>
            </label>
          </Row>
          <div className="mt-[9px]">
            <Row label="Ottimizzazione:">
              <Combo label="Ottimizzazione" value="Disabilitato" width="w-[360px]" />
              <Combo label="Criterio" value="Balance max" width="w-[240px]" tone="off" />
            </Row>
          </div>
          <div className="mt-[7px] flex items-center gap-[7px] pr-[9px]">
            <span className="w-[100px] shrink-0 text-right">Progresso Testing:</span>
            <div className="h-[20px] grow border border-[#bcbcbc] bg-[#e6e6e6]" />
            <button className="h-[22px] w-[149px] border border-[#adadad] bg-[#e1e1e1] font-bold">Inizio</button>
          </div>
        </div>
        <Tabs items={["Impostazioni", "Dati in ingresso", "Agenti", "Diario"]} active="Impostazioni" />
      </div>
    </section>
  )
}

function StatusBar() {
  const cell = "flex h-[18px] shrink-0 items-center border-l border-[#a0a0a0]"
  return (
    <footer className="flex h-[23px] items-center pt-px text-[11px]">
      <span className="grow pl-[2px]">Mostra la lista dei simboli, Ctrl+U</span>
      <span className={clsx(cell, "w-[128px] pl-[5px]")}>Default</span>
      <span className={clsx(cell, "w-[98px]")} />
      <span className={clsx(cell, "w-[71px]")} />
      <span className={clsx(cell, "w-[70px]")} />
      <span className={clsx(cell, "w-[68px]")} />
      <span className={clsx(cell, "w-[70px]")} />
      <span className={clsx(cell, "w-[66px]")} />
      <span className={clsx(cell, "w-[121px] gap-[5px] pl-[4px]")}>
        <svg width="16" height="11" viewBox="0 0 16 11" aria-hidden="true">
          <path d="M.5 8.500h2v2h-2zM3.500 7h2v3.500h-2zM6.500 5h2v5.500h-2zM9.500 2.500h2v8h-2zM12.500.500h2v10h-2z" fill="#4cd02c" stroke="#1f8a12" strokeWidth=".8" />
        </svg>
        93.39 ms
      </span>
    </footer>
  )
}

/* ---------- taskbar ---------- */

function CheckTile() {
  return (
    <Svg size={24}>
      <defs>
        <linearGradient id="tile" x1="0" y1="0" x2="1" y2="1">
          <stop offset="0" stopColor="#9a9ea2" />
          <stop offset=".5" stopColor="#eceeef" />
          <stop offset="1" stopColor="#a9adb1" />
        </linearGradient>
      </defs>
      <path d="M0 0h24v24H0z" fill="url(#tile)" />
      <path d="M3 11l4-1 4 6L20 1h3L12 23H9z" fill="#16446e" />
    </Svg>
  )
}

const apps: { name: string; state?: "open" | "focus"; icon: ReactNode }[] = [
  { name: "ActivTrades", icon: <CheckTile /> },
  {
    name: "Edge",
    icon: (
      <Svg size={24}>
        <path d="M2 11C3 4.500 7 1 12.500 1 19 1 22 6 22 11v3H9c.5 6 8 6 12 3.500v4c-2 1.500-5 2-8 2C7 23.500 4 20 4 15.500c0-3 1.500-5.500 4-7C5.500 9 3.500 10 2 11zM9 10h7.500c0-3-1.500-4.500-3.700-4.500C10.500 5.500 9.300 7.500 9 10z" fill="#0a78d6" />
      </Svg>
    ),
  },
  {
    name: "Esplora file",
    icon: (
      <Svg size={24}>
        <path d="M1 3h9l2 2h11v17H1z" fill="#f5d571" />
        <path d="M3 3h6v3H3z" fill="#fff3c4" />
        <path d="M1 8h22v14H1z" fill="#fbe292" />
        <path d="M6 22v-7c0-2 1-3 3-3h6c2 0 3 1 3 3v7h-4v-5h-4v5z" fill="#3ba0dd" />
      </Svg>
    ),
  },
  {
    name: "Store",
    icon: (
      <Svg size={24}>
        <path d="M8 6V4c0-4 8-4 8 0v2" stroke="#fff" strokeWidth="1.500" />
        <path d="M1 6h22v17H1z" fill="#fff" />
        <path d="M7 9h4.500v4.500H7z" fill="#f25022" />
        <path d="M12.500 9H17v4.500h-4.500z" fill="#7fba00" />
        <path d="M7 14.500h4.500V19H7z" fill="#00a4ef" />
        <path d="M12.500 14.500H17V19h-4.500z" fill="#ffb900" />
      </Svg>
    ),
  },
  {
    name: "Regali",
    icon: (
      <Svg size={24}>
        <rect width="24" height="24" rx="2" fill="#fff" />
        <path d="M3 8h8v4H3zM13 8h8v4h-8zM4 13.500h7V22H4zM13 13.500h7V22h-7z" fill="#c4161c" />
        <path d="M12 7C7 8 6 2.500 8.500 2.500S12 7 12 7s1-4.500 3.500-4.500S17 8 12 7z" stroke="#c4161c" strokeWidth="1.500" />
      </Svg>
    ),
  },
  {
    name: "Posta",
    icon: (
      <Svg size={34}>
        <path d="M5 12L17 4l12 8v13H5z" fill="#fff" />
        <path d="M7 12h20L17 19z" fill="#0a0a0a" />
        <circle cx="29" cy="24" r="8" fill="#3c3c3c" stroke="#999" />
        <text x="29" y="28" fill="#fff" fontSize="11" textAnchor="middle">14</text>
      </Svg>
    ),
  },
  {
    name: "Chrome",
    state: "open",
    icon: (
      <Svg size={24}>
        <circle cx="12" cy="12" r="11.500" fill="#ffce43" />
        <path d="M2 6.300A11.500 11.500 0 0 1 22 6.500H12L7 14.500z" fill="#e33b2e" />
        <path d="M2 6.300A11.500 11.500 0 0 0 11.500 23.500L16.500 15l-9 .5z" fill="#2da94f" />
        <circle cx="12" cy="12" r="5.300" fill="#fff" />
        <circle cx="12" cy="12" r="4.200" fill="#4487f4" />
      </Svg>
    ),
  },
  {
    name: "Sublime Text",
    icon: (
      <Svg size={24}>
        <rect width="24" height="24" rx="2" fill="#4a4a4a" />
        <path d="M5 8.500L18.500 4v4.500L11 11l7.500 2.500v3.500L5 21v-4.500l7-2.500-7-2.500z" fill="#ff9800" />
      </Svg>
    ),
  },
  { name: "MetaTrader 5", state: "focus", icon: <CheckTile /> },
  {
    name: "Strumento di cattura",
    state: "open",
    icon: (
      <Svg size={24}>
        <ellipse cx="11" cy="9" rx="10" ry="7.500" fill="#e9e9e9" stroke="#c43a34" strokeWidth="1.500" transform="rotate(-20 11 9)" />
        <path d="M13 5l3 12M20 8l-9 6" stroke="#999" strokeWidth="1.500" />
        <path d="M15 12l3 10M13 18l10-4M17 16l5 4" stroke="#2a73bd" strokeWidth="1.800" />
      </Svg>
    ),
  },
]

function Taskbar() {
  return (
    <div className="flex h-[40px] bg-[#080808] text-white">
      <button aria-label="Start" className="flex w-[48px] items-center justify-center">
        <Svg><path d="M0 2.300L6.700 1.300v6.300H0zM7.500 1.200L16 0v7.600H7.500zM0 8.400h6.700v6.300L0 13.800zM7.500 8.400H16V16l-8.500-1.200z" fill="#fff" /></Svg>
      </button>
      <div className="flex w-[344px] items-center border-t border-[#c4c4c4] bg-[#f2f2f2] pl-[9px] pr-[14px]">
        <Svg size={22}><circle cx="11" cy="11" r="8.500" stroke="#111" strokeWidth="2.500" /></Svg>
        <input aria-label="Cerca" placeholder="Scrivi qui per eseguire la ricerca" className="w-0 grow bg-transparent pl-[9px] text-[14px] outline-none placeholder:text-[#4a4a4a]" />
        <Svg size={16}>
          <rect x="5.500" y="1" width="5" height="9" rx="2.500" stroke="#333" />
          <path d="M3 7v2c0 5 10 5 10 0V7M8 12.500V15M5.500 15.500h5" stroke="#333" />
        </Svg>
      </div>
      <button aria-label="Visualizzazione attività" className="flex w-[50px] items-center justify-center">
        <Svg size={18}>
          <path d="M2 1v2h10V1M2 17v-2h10v2M2.500 6h9v6.500h-9zM15.500 1v3M15.500 9v8" stroke="#fff" strokeWidth="1.200" />
          <path d="M14 5h3v3h-3z" fill="#fff" />
        </Svg>
      </button>
      {apps.map(app => (
        <button
          key={app.name}
          aria-label={app.name}
          className={clsx("relative flex w-[49px] items-center justify-center [&>svg]:overflow-visible", app.state === "focus" && "bg-[#3a3a3a]")}
        >
          {app.icon}
          {app.state && <span className={clsx("absolute bottom-0 h-[2px] bg-[#76b9ed]", app.state === "focus" ? "inset-x-0" : "inset-x-1")} />}
        </button>
      ))}
      <div className="ml-auto flex items-center text-[12px]">
        <Svg size={18}>
          <circle cx="6" cy="9" r="2.500" stroke="#fff" strokeWidth="1.200" />
          <path d="M2 16c0-5 8-5 8 0M9.500 8c2-2 6-1 6 2" stroke="#fff" strokeWidth="1.200" />
          <circle cx="12" cy="4" r="2.500" stroke="#fff" strokeWidth="1.200" />
        </Svg>
        <span className="ml-[21px] flex items-center gap-[8px]">
          <Svg size={14}><path d="M2 9l5-5 5 5" stroke="#fff" strokeWidth="1.200" /></Svg>
          <Svg size={18}><path d="M2 13c-3-2-1-5 1-5 0-3 4-5 6-2 4-2 6 1 6 3 3 0 3 5 0 5H5c-1 0-2 0-3-1z" fill="#fff" /></Svg>
          <Svg size={16}><path d="M.5 4.500h13v7H.5zM15 6.500v3" stroke="#fff" /><path d="M2 6h6v4H2z" fill="#fff" /></Svg>
          <Svg size={16}>
            <path d="M2 13C2 7 7 2 13 2M5 13.500c0-4.500 3.500-8 8-8M8 14c0-3 2-5 5-5" stroke="#ccc" strokeWidth="1.200" />
            <circle cx="12" cy="13" r="1.600" fill="#fff" />
          </Svg>
          <Svg size={16}><path d="M1 6h2.500L7 2.500v11L3.500 10H1z" stroke="#fff" /><path d="M9 6c1 1 1 3 0 4M11 4.500c2 2 2 5 0 7" stroke="#fff" /><path d="M13 3c3 3 3 7 0 10" stroke="#777" /></Svg>
        </span>
        <span className="ml-[12px]">ITA</span>
        <time className="ml-[9px] w-[70px] text-center text-[11px] leading-[18px]">21:21<br />14/01/2019</time>
        <span className="ml-[9px] mr-[9px]">
          <Svg size={28}>
            <path d="M3 5h16v13h-8l-4 4v-4H3z" fill="#fff" />
            <path d="M6 8.500h10M6 11.500h10M6 14.500h6" stroke="#111" />
            <circle cx="18" cy="19" r="7.500" fill="#3c3c3c" stroke="#999" />
            <text x="18" y="23" fill="#fff" fontSize="11" textAnchor="middle">4</text>
          </Svg>
        </span>
        <span className="h-[40px] w-[5px] border-l border-[#555]" />
      </div>
    </div>
  )
}

export default function App() {
  return (
    <div className="flex min-h-screen w-full flex-col overflow-hidden bg-[#f0f0f0] font-['Open_Sans','Noto_Sans',sans-serif] text-black">
      <MenuBar />
      <Toolbar />
      <Timeframes />
      <main className="flex h-[487px] border-b border-[#a0a0a0]">
        <MarketWatch />
        <Navigator />
        <ChartArea />
      </main>
      <Toolbox />
      <Tester />
      <StatusBar />
      <Taskbar />
    </div>
  )
}
